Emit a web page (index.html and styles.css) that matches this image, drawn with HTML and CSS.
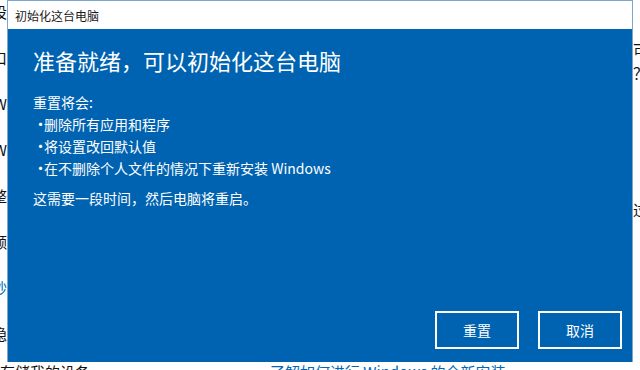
FILE: index.html
```html
<!doctype html>
<html lang="zh-CN">
  <head>
    <meta charset="UTF-8" />
    <title>初始化这台电脑</title>
    <link rel="stylesheet" href="styles.css">
  </head>
  <body>
    <div class="screen">
      <div class="side side-left">
        <span class="frag">我的设</span>
        <span class="frag">窗口</span>
        <span class="frag">Windows W</span>
        <span class="frag">Windows W</span>
        <span class="frag">初始化整</span>
        <span class="frag">保留个人额</span>
        <span class="frag link">其他选项妙</span>
        <span class="frag">个人隐</span>
      </div>

      <div class="dialog">
        <div class="titlebar">初始化这台电脑</div>
        <div class="content">
          <h1>准备就绪，可以初始化这台电脑</h1>
          <p class="intro">重置将会:</p>
          <ul class="changes">
            <li>删除所有应用和程序</li>
            <li>将设置改回默认值</li>
            <li>在不删除个人文件的情况下重新安装 Windows</li>
          </ul>
          <p class="note">这需要一段时间，然后电脑将重启。</p>
          <div class="actions">
            <button class="btn">重置</button>
            <button class="btn">取消</button>
          </div>
        </div>
      </div>

      <div class="side side-right">
        <span class="frag">可</span>
        <span class="frag">？</span>
        <span class="frag gap">过</span>
      </div>
    </div>
    <div class="footer">
      <span class="plain">存储我的设备</span>
      <span class="link">了解如何进行 Windows 的全新安装</span>
    </div>
  </body>
</html>
```

FILE: styles.css
```css
* {
  box-sizing: border-box;
  margin: 0;
  padding: 0;
}

body {
  font-family: "Noto Sans CJK SC", "Noto Sans", sans-serif;
  background: #ffffff;
  color: #111;
  width: 640px;
  height: 370px;
  overflow: hidden;
}

.screen {
  display: flex;
  height: 362px;
}

.side {
  width: 7px;
  overflow: hidden;
  display: flex;
  flex-direction: column;
  font-size: 15px;
  line-height: 20px;
}

.side-left {
  align-items: flex-end;
  padding-top: 2px;
  gap: 26px;
}

.side-right {
  align-items: flex-start;
  padding-top: 40px;
  gap: 3px;
}

.side-right .gap {
  margin-top: 114px;
}

.frag {
  white-space: nowrap;
}

.link {
  color: #0067b8;
}

.dialog {
  width: 626px;
  height: 362px;
  display: flex;
  flex-direction: column;
  border: 1px solid #7ea6d3;
  border-bottom: none;
}

.titlebar {
  height: 28px;
  flex-shrink: 0;
  display: flex;
  align-items: center;
  padding-left: 7px;
  background: #fff;
  font-size: 12px;
  color: #1a1a1a;
}

.content {
  flex: 1;
  background: #0063b1;
  color: #fff;
  padding: 16px 10px 13px 25px;
  display: flex;
  flex-direction: column;
}

.content h1 {
  font-size: 22px;
  font-weight: 400;
  line-height: 30px;
  margin-bottom: 16px;
}

.intro,
.note,
.changes li {
  font-size: 14px;
  line-height: 22px;
}

.changes {
  list-style: none;
}

.changes li::before {
  content: "•";
  display: inline-block;
  width: 11px;
  font-size: 15px;
}

.note {
  margin-top: 8px;
}

.actions {
  margin-top: auto;
  display: flex;
  justify-content: flex-end;
  gap: 19px;
}

.btn {
  width: 84px;
  height: 38px;
  background: transparent;
  color: #fff;
  border: 2px solid #ffffff;
  font-family: inherit;
  font-size: 14px;
}

.footer {
  display: flex;
  font-size: 15px;
  line-height: 20px;
  white-space: nowrap;
}

.footer .plain {
  width: 270px;
}
```
